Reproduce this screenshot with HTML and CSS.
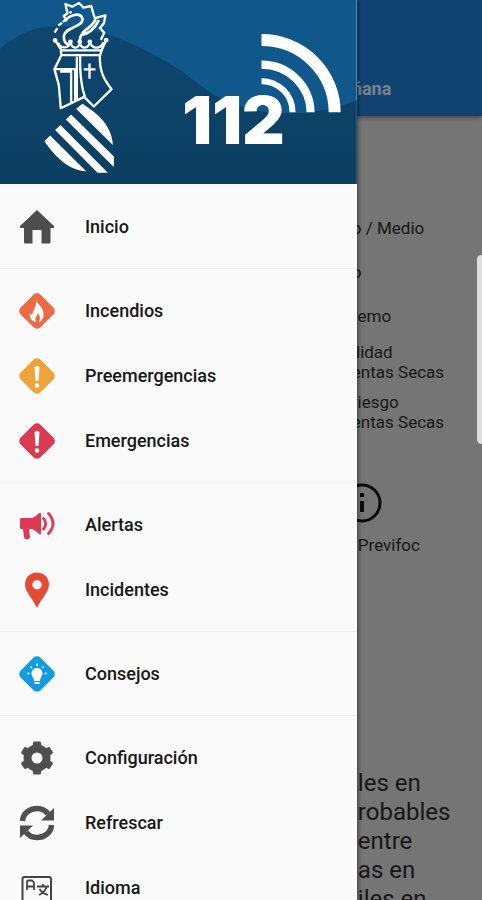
FILE: index.html
```html
<!DOCTYPE html>
<html lang="es">
  <head>
    <meta charset="UTF-8" />
    <meta name="viewport" content="width=device-width, initial-scale=1.0" />
    <title>112</title>
    <link rel="stylesheet" href="styles.css">
  </head>
  <body>
    <div class="page">
      <header class="topbar">
        <span class="tab">ñana</span>
      </header>
      <main class="content">
        <ul class="levels">
          <li>o / Medio</li>
          <li>o</li>
          <li>remo</li>
        </ul>
        <ul class="storms">
          <li>ilidad<br>entas Secas</li>
          <li>riesgo<br>entas Secas</li>
        </ul>
        <div class="previfoc">
          <svg class="info" viewBox="0 0 40 40">
            <circle cx="20" cy="20" r="18" fill="none" stroke="#0b0b0b" stroke-width="3" />
            <path d="M20 18v11M20 10v4" stroke="#0b0b0b" stroke-width="4" />
          </svg>
          <span>Previfoc</span>
        </div>
        <p class="forecast">les en<br>robables<br>entre<br>as en<br>iles en</p>
      </main>
    </div>
    <div class="scroll-handle"></div>

    <aside class="drawer">
      <svg class="banner" viewBox="0 0 356 184">
        <defs>
          <linearGradient id="sea" x1="0" y1="0" x2="0" y2="1">
            <stop offset="0" stop-color="#0f466f" />
            <stop offset="1" stop-color="#0b3f61" />
          </linearGradient>
        </defs>
        <rect width="356" height="184" fill="#10588c" />
        <path d="M0 49C18 32 38 26 56 26C104 26 148 50 180 70C206 88 226 113 290 113C316 113 338 107 356 100V184H0Z" fill="url(#sea)" />
        <!-- coat of arms -->
        <g transform="scale(.3333)" fill="none" stroke="#fff" stroke-width="7" stroke-linejoin="round">
          <path d="M163 98L172 84M175 77L186 68M188 64L198 61L191 48L202 40L196 12L216 20L237 9L250 23L273 18L280 42L284 54L316 46L311 70L299 84L312 98L302 120" />
          <path d="M196 62C206 46 240 34 247 56C250 82 194 80 191 108C191 122 197 132 206 134" stroke-width="8" />
          <path d="M286 54C284 82 242 86 239 120M246 104C262 102 284 88 296 60" stroke-width="8" />
          <path d="M165 120L184 151H304L319 118M174 128C180 146 206 148 211 126C216 148 234 148 239 128C244 148 264 148 269 126C276 148 302 148 310 126" />
          <g fill="#fff" stroke="none">
            <circle cx="165" cy="121" r="7" />
            <circle cx="211" cy="125" r="7" />
            <circle cx="239" cy="125" r="7" />
            <circle cx="269" cy="125" r="7" />
            <circle cx="318" cy="120" r="7" />
            <circle cx="211" cy="37" r="4" />
          </g>
          <path d="M182 151L184 165H300L304 151M184 165L163 207L176 254L182 324L252 290L281 319L334 267C308 234 298 212 299 165M240 165C239 220 242 260 256 294M163 207H225V302M180 214H213V307M230 170V298" />
          <path d="M268 190V236M251 208H286" />
          <g fill="#fff" stroke="none">
            <path d="M228 326L247 311C295 342 333 375 338 434Z" />
            <path d="M197 358L213 343L341 469V500Z" />
            <path d="M165 389L181 374L323 517H292Z" />
            <path d="M133 423L150 406L258 513C206 510 168 473 133 423Z" />
          </g>
        </g>
        <g fill="none" stroke="#fff">
          <path d="M261 40A73 72 0 0 1 334 112" stroke-width="12" />
          <path d="M261 64.500A49 48 0 0 1 310 112" stroke-width="8" />
          <path d="M261 81A31 31 0 0 1 292 112" stroke-width="6" />
        </g>
        <text class="number" x="182" y="144">112</text>
      </svg>

      <nav class="menu">
        <a href="#" class="item">
          <svg class="icon" viewBox="0 0 36 36">
            <path d="M18 1L35 17Q36 19 33 19H31.500V33Q31.500 34.500 30 34.500H22.500V21H13.500V34.500H6Q5 34.500 5 33V19H3Q0 19 1 17Z" fill="#4d4d4d" />
          </svg>
          <span>Inicio</span>
        </a>
        <hr>
        <a href="#" class="item">
          <svg class="icon" viewBox="0 0 36 36">
            <rect x="4" y="4" width="28" height="28" rx="5" transform="rotate(45 18 18)" fill="#ee6a45" />
            <path d="M17 7C19 12 24 14 24.500 20C25 25 23 28 19.500 29C22 26 21 23 19 20C18 24 15 24 17 29C12 28 10 24 11 20C12 22 13 22 13.500 21C14 17 18 13 17 7Z" fill="#fff" />
          </svg>
          <span>Incendios</span>
        </a>
        <a href="#" class="item">
          <svg class="icon" viewBox="0 0 36 36">
            <rect x="4" y="4" width="28" height="28" rx="5" transform="rotate(45 18 18)" fill="#f0a337" />
            <path d="M15.500 9Q18 7 20.500 9L19.500 23H16.500Z" fill="#fff" />
            <circle cx="18" cy="27.500" r="2.300" fill="#fff" />
          </svg>
          <span>Preemergencias</span>
        </a>
        <a href="#" class="item">
          <svg class="icon" viewBox="0 0 36 36">
            <rect x="4" y="4" width="28" height="28" rx="5" transform="rotate(45 18 18)" fill="#da3b50" />
            <path d="M15.500 9Q18 7 20.500 9L19.500 23H16.500Z" fill="#fff" />
            <circle cx="18" cy="27.500" r="2.300" fill="#fff" />
          </svg>
          <span>Emergencias</span>
        </a>
        <hr>
        <a href="#" class="item">
          <svg class="icon" viewBox="0 0 36 36">
            <path d="M2 11H13C16 10 18 8 20 6Q22 5 22 7V26Q22 28 20 27C18 25 16 23 13 22H10L11 30Q11 32 9 32H7Q5 32 5 30L4 22H2Q1 22 1 21V12Q1 11 2 11Z" fill="#dd3b53" />
            <path d="M24.500 11.500Q29 16.500 24.500 22M29.500 6.500Q38.500 16.500 29.500 26.500" fill="none" stroke="#dd3b53" stroke-width="2.800" stroke-linecap="round" />
          </svg>
          <span>Alertas</span>
        </a>
        <a href="#" class="item">
          <svg class="icon" viewBox="0 0 36 36">
            <path d="M18 .500C11 .500 6 6 6 12.500C6 20 14 27 18 36C22 27 30 20 30 12.500C30 6 25 .500 18 .500ZM18 8A4.700 4.700 0 1 1 18 17.400A4.700 4.700 0 1 1 18 8Z" fill="#e54a34" />
          </svg>
          <span>Incidentes</span>
        </a>
        <hr>
        <a href="#" class="item">
          <svg class="icon" viewBox="0 0 36 36">
            <rect x="4" y="4" width="28" height="28" rx="5" transform="rotate(45 18 18)" fill="#109de0" />
            <path d="M18 12C14.500 12 12.500 14.500 12.500 17.500C12.500 20 15 21.500 15 25H21C21 21.500 23.500 20 23.500 17.500C23.500 14.500 21.500 12 18 12ZM15.500 26H20.500V28H15.500Z" fill="#fff" />
            <path d="M18 7.500V10M11.500 10.500L13 12M24.500 10.500L23 12M8 17.500H10.500M28 17.500H25.500" stroke="#fff" stroke-width="1.500" />
          </svg>
          <span>Consejos</span>
        </a>
        <hr>
        <a href="#" class="item">
          <svg class="icon" viewBox="0 0 36 36">
            <g fill="none" stroke="#4f4f4f" stroke-linejoin="round">
              <circle cx="18" cy="18" r="9.500" stroke-width="8" />
              <path d="M15.500 3H20.500L21 7H15ZM15.500 33H20.500L21 29H15ZM3.700 12.500L6.200 8.500L10 10.500L7 15ZM32.300 12.500L29.800 8.500L26 10.500L29 15ZM3.700 23.500L6.200 27.500L10 25.500L7 21ZM32.300 23.500L29.800 27.500L26 25.500L29 21Z" fill="#4f4f4f" stroke-width="3" />
            </g>
          </svg>
          <span>Configuración</span>
        </a>
        <a href="#" class="item">
          <svg class="icon" viewBox="0 0 36 36">
            <path d="M3.500 16C4 8 11 3.500 18 3.500C23 3.500 27 6 29 9M32.500 20C32 28 25 32.500 18 32.500C13 32.500 9 30 7 27" fill="none" stroke="#4f4f4f" stroke-width="5.500" />
            <path d="M35 3V15.500H22ZM1 33V20.500H14Z" fill="#4f4f4f" />
          </svg>
          <span>Refrescar</span>
        </a>
        <a href="#" class="item">
          <svg class="icon" viewBox="0 0 36 36">
            <rect x="3.500" y="7" width="28.500" height="26" rx="2" fill="none" stroke="#444" stroke-width="2" />
            <path d="M8 20V12Q8 10.500 9.500 10.500H13L15 12.500V20M8 16.500H15M18 16.500H30M24 14V16.500M20 25Q26 22 27.500 17M20.500 19Q23 23 29 25" fill="none" stroke="#444" stroke-width="1.800" />
          </svg>
          <span>Idioma</span>
        </a>
      </nav>
    </aside>
  </body>
</html>
```
FILE: styles.css
```css
* {
  box-sizing: border-box;
}
body {
  margin: 0;
  height: 100vh;
  overflow: hidden;
  background: #757575;
  color: #171717;
  font-family: Roboto, sans-serif;
  font-size: 17px;
  line-height: 20px;
}
ul {
  list-style: none;
  margin: 0;
  padding: 0;
}
.page {
  white-space: nowrap;
}
.topbar {
  height: 116px;
  padding: 79px 0 0 73%;
  background: #104371;
  box-shadow: 0 1px 5px rgba(0, 0, 0, 0.5);
}
.tab {
  color: #7b8287;
  font-size: 18px;
  font-weight: 700;
}
.content {
  padding: 102px 0 0 73%;
}
.levels,
.storms {
  display: flex;
  flex-direction: column;
  gap: 24px;
}
.storms {
  gap: 10px;
  margin-top: 16px;
}
.previfoc {
  display: flex;
  flex-direction: column;
  margin-top: 51px;
  padding-left: 6px;
}
.info {
  width: 40px;
  height: 40px;
  margin: 0 0 12px -16px;
}
.forecast {
  margin: 214px 0 0;
  padding-left: 6px;
  font-size: 24px;
  line-height: 29px;
}
.scroll-handle {
  position: absolute;
  top: 255px;
  right: -4px;
  width: 9px;
  height: 189px;
  border-radius: 5px;
  background: #dedede;
}

/* drawer */
.drawer {
  position: absolute;
  top: 0;
  bottom: 0;
  left: 0;
  width: 74%;
  overflow: hidden;
  background: #fafafa;
  box-shadow: 1px 0 4px rgba(0, 0, 0, 0.5);
}
.banner {
  display: block;
  width: 100%;
}
.number {
  fill: #fff;
  font-family: Inter, sans-serif;
  font-size: 66px;
  font-weight: 900;
}
.menu {
  padding-top: 10px;
}
.menu hr {
  margin: 9px 0;
  border: 0;
  border-top: 1px solid #f0f0f0;
}
.item {
  display: flex;
  align-items: center;
  gap: 30px;
  height: 65px;
  padding-left: 19px;
  color: #171717;
  font-size: 18px;
  font-weight: 500;
  text-decoration: none;
}
.icon {
  width: 36px;
  height: 36px;
}
```
